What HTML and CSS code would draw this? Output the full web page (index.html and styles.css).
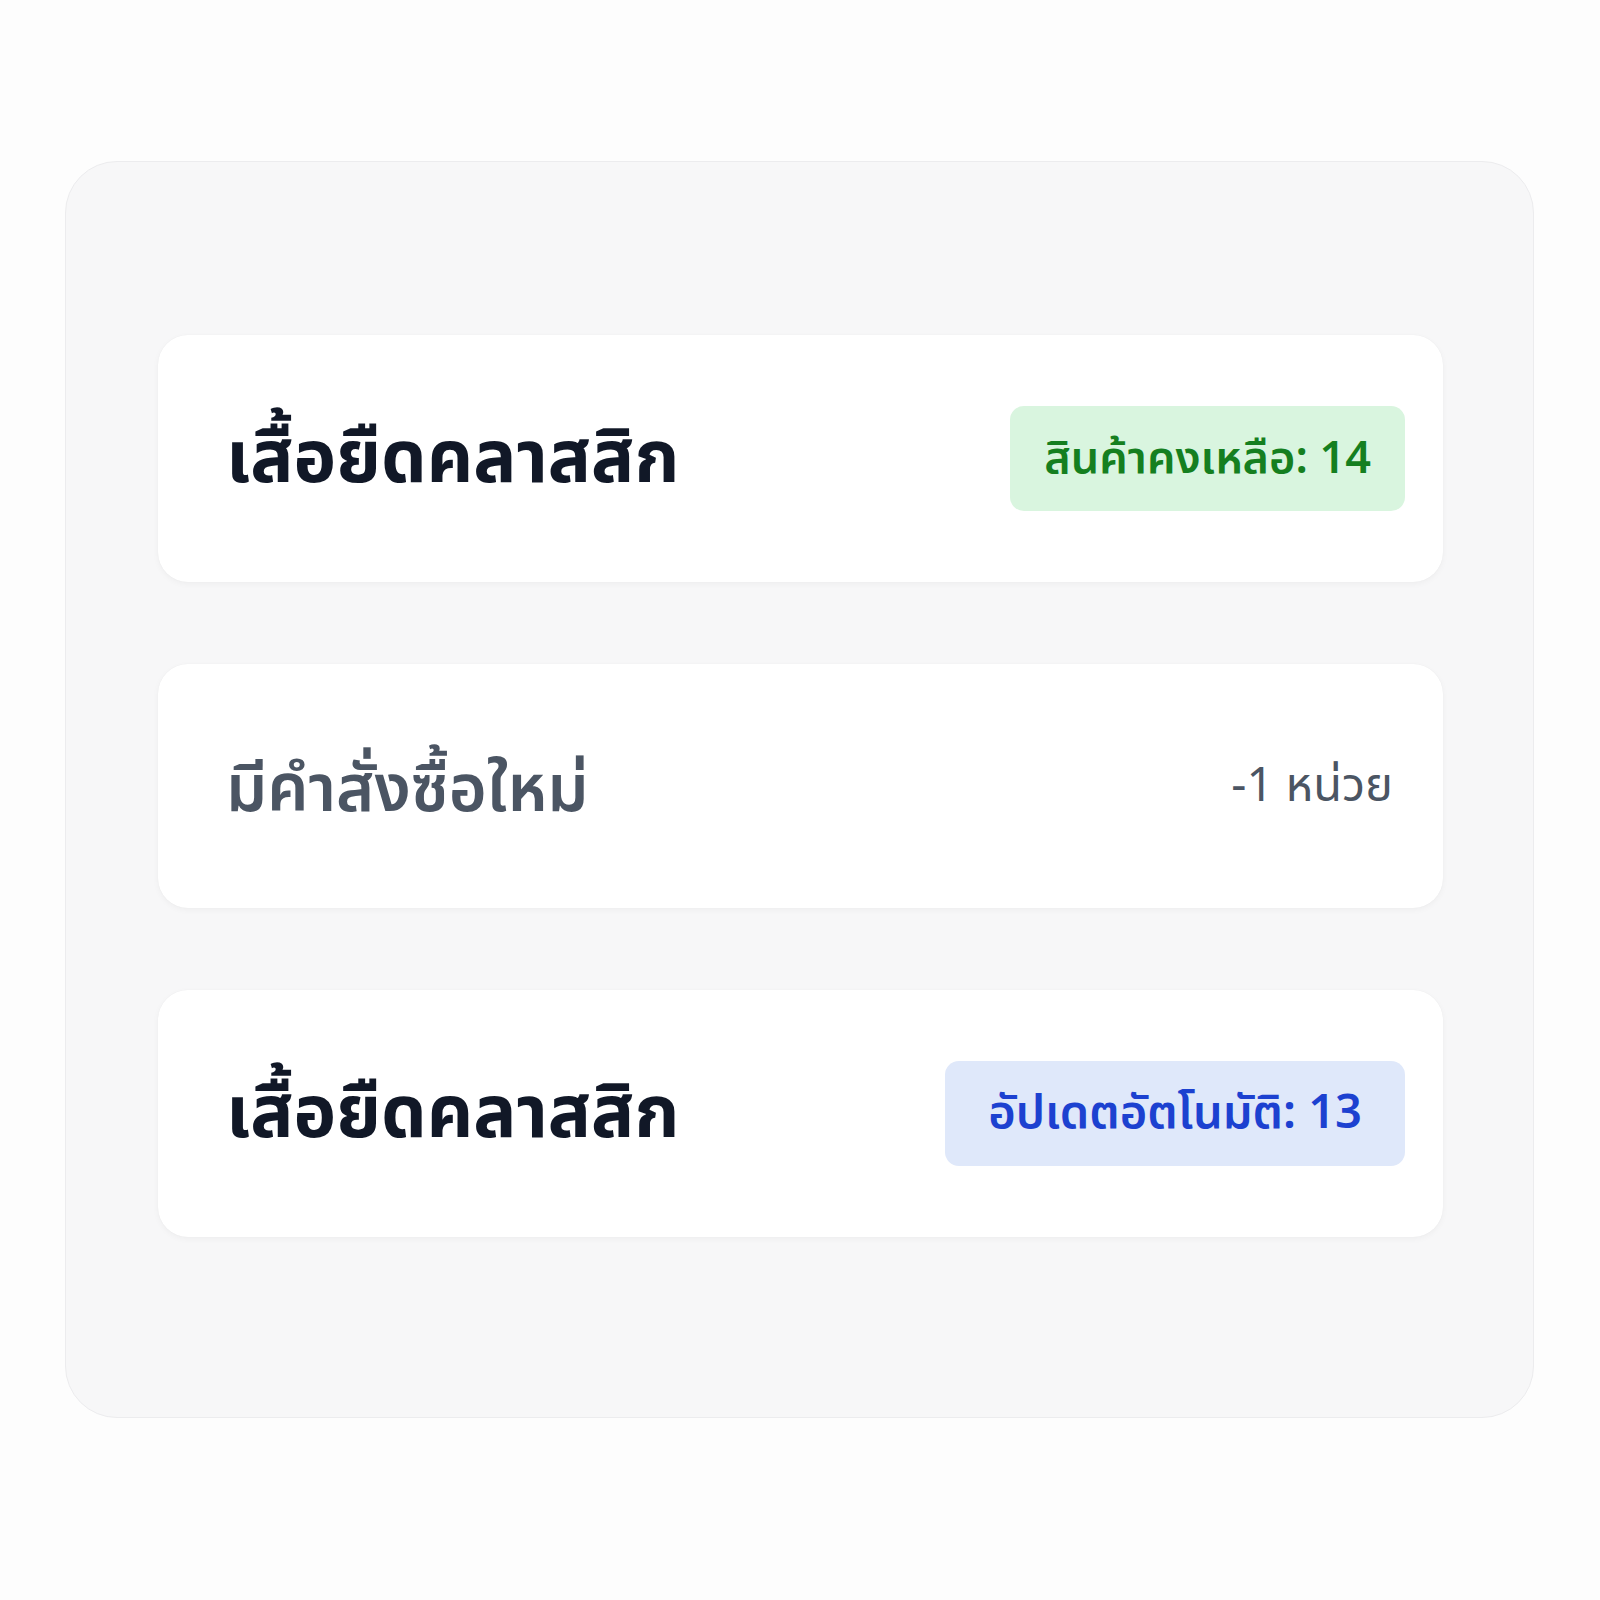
FILE: index.html
```html
<!DOCTYPE html>
<html lang="th">
<head>
    <meta charset="UTF-8">
    <meta name="viewport" content="width=device-width, initial-scale=1.0">
    <title>สต็อกสินค้า</title>
    <link rel="stylesheet" href="styles.css">
</head>
<body>
    <div class="panel">
        <div class="stock-card">
            <span class="product-name">เสื้อยืดคลาสสิก</span>
            <span class="badge badge-green">สินค้าคงเหลือ: 14</span>
        </div>

        <div class="stock-card">
            <span class="event-name">มีคำสั่งซื้อใหม่</span>
            <span class="delta">-1 หน่วย</span>
        </div>

        <div class="stock-card">
            <span class="product-name">เสื้อยืดคลาสสิก</span>
            <span class="badge badge-blue">อัปเดตอัตโนมัติ: 13</span>
        </div>
    </div>
</body>
</html>
```

FILE: styles.css
```css
body {
    font-family: "Noto Sans", "Noto Sans Thai", sans-serif;
    margin: 0;
    padding: 161px 66px 0 65px;
    background: #fdfdfd;
    min-height: 100vh;
    box-sizing: border-box;
}

.panel {
    background: #f7f7f8;
    border: 1px solid #ececee;
    border-radius: 52px;
    padding: 173px 90px 180px 92px;
    display: flex;
    flex-direction: column;
    gap: 82px;
}

.stock-card {
    background: #fff;
    border-radius: 30px;
    box-shadow: 0 2px 6px rgba(0, 0, 0, 0.04), 0 0 1px rgba(0, 0, 0, 0.06);
    padding: 71px 38px 71px 68px;
    display: flex;
    align-items: center;
    justify-content: space-between;
}

/* title sits a few px above the card's middle */
.product-name {
    font-size: 72px;
    font-weight: 700;
    color: #111827;
    line-height: 94px;
    padding-bottom: 10px;
}

.event-name {
    font-size: 65px;
    font-weight: 600;
    color: #4b5563;
    line-height: 102px;
}

.delta {
    font-size: 47px;
    color: #4b5563;
    margin-right: 12px;
}

.badge {
    height: 105px;
    display: flex;
    align-items: center;
    padding: 0 34px;
    border-radius: 14px;
    font-size: 45px;
    font-weight: 600;
    box-sizing: border-box;
}

.badge-green {
    background: #d9f5df;
    color: #157f20;
}

.badge-blue {
    background: #dfe8fa;
    color: #1c41d0;
    font-size: 47px;
    padding: 0 43px;
}
```
